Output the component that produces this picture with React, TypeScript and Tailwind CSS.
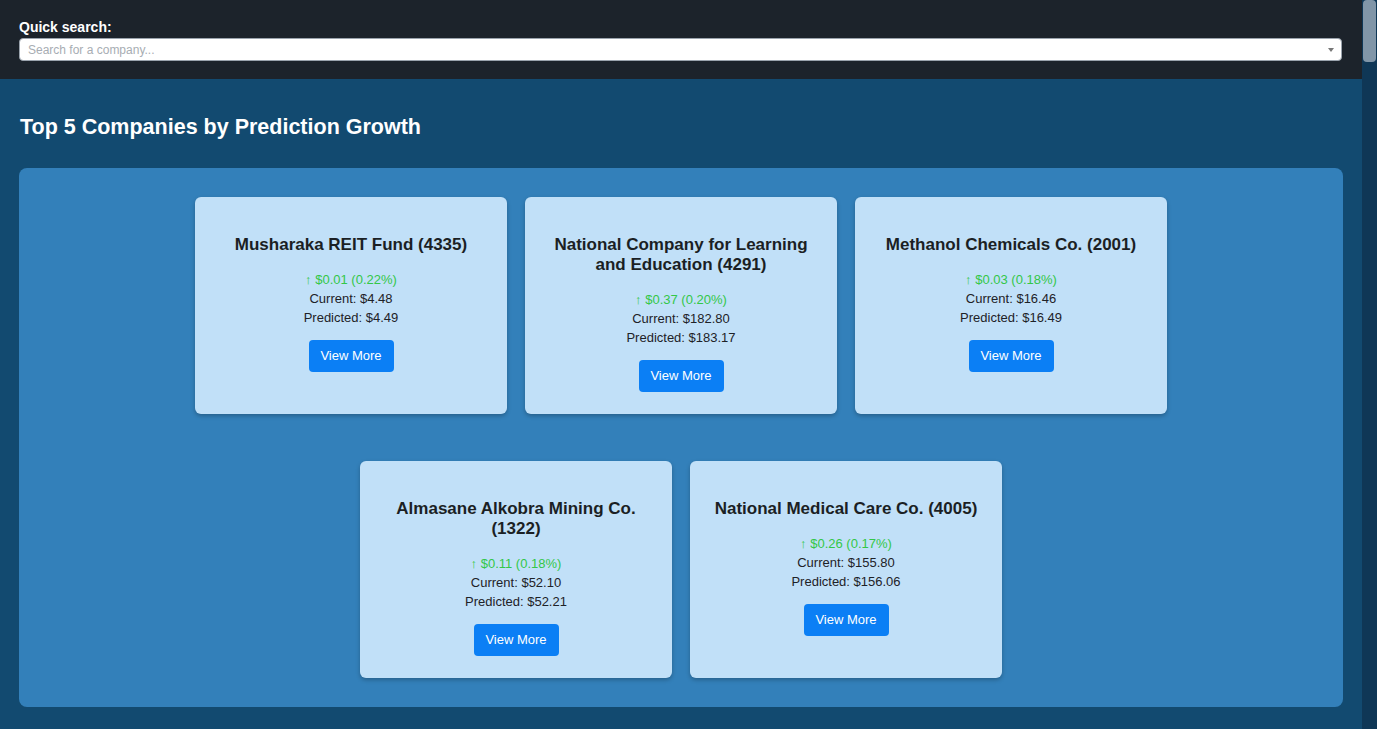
const companies = [
  { name: 'Musharaka REIT Fund (4335)', change: '0.01', pct: '0.22', current: '4.48', predicted: '4.49' },
  { name: 'National Company for Learning and Education (4291)', change: '0.37', pct: '0.20', current: '182.80', predicted: '183.17' },
  { name: 'Methanol Chemicals Co. (2001)', change: '0.03', pct: '0.18', current: '16.46', predicted: '16.49' },
  { name: 'Almasane Alkobra Mining Co. (1322)', change: '0.11', pct: '0.18', current: '52.10', predicted: '52.21' },
  { name: 'National Medical Care Co. (4005)', change: '0.26', pct: '0.17', current: '155.80', predicted: '156.06' },
];

function CompanyCard({ c }) {
  return (
    <div className="w-[312px] bg-[#c1e0f8] rounded-md shadow-[0_2px_4px_rgba(0,0,0,0.25)] px-5 pt-[38px] pb-[22px] flex flex-col items-center text-center">
      <h3 className="text-[17px] leading-[20px] font-bold text-[#1b1f24]">{c.name}</h3>
      <div className="mt-[15px] text-[13px] leading-[19px] text-[#1e2227]">
        <p className="text-[#33c748]">↑ ${c.change} ({c.pct}%)</p>
        <p>Current: ${c.current}</p>
        <p>Predicted: ${c.predicted}</p>
      </div>
      <button className="mt-[13px] w-[85px] h-[32px] rounded bg-[#0b7ff5] text-white text-[13px]">
        View More
      </button>
    </div>
  );
}

export default function App() {
  return (
    <div className="flex h-[729px] overflow-hidden font-['Liberation_Sans',Arial,sans-serif] bg-[#124a70]">
      <div className="flex-1 flex flex-col">
        {/* search header */}
        <header className="bg-[#1c232b] pl-[19px] pr-[20px] pt-[19px] pb-[18px]">
          <label className="block text-white text-[14px] leading-[16px] font-bold mb-[3px]">Quick search:</label>
          <div className="relative h-[23px] bg-white border border-[#9aa3ad] rounded-sm flex items-center px-2">
            <span className="text-[12px] text-[#a7adb3]">Search for a company...</span>
            <span className="absolute right-[7px] top-[9px] w-0 h-0 border-l-[3px] border-r-[3px] border-t-[4px] border-l-transparent border-r-transparent border-t-[#777]" />
          </div>
        </header>

        <main className="px-[19px] pt-[35px]">
          <h2 className="text-white text-[21.5px] leading-[26px] font-bold mb-[28px] pl-px">Top 5 Companies by Prediction Growth</h2>
          <div className="bg-[#3380ba] rounded-lg py-[29px] flex flex-wrap justify-center gap-x-[18px] gap-y-[47px]">
            <div className="w-full flex justify-center gap-x-[18px]">
              {companies.slice(0, 3).map((c) => <CompanyCard key={c.name} c={c} />)}
            </div>
            <div className="w-full flex justify-center gap-x-[18px]">
              {companies.slice(3).map((c) => <CompanyCard key={c.name} c={c} />)}
            </div>
          </div>
        </main>
      </div>

      {/* scrollbar */}
      <div className="w-[15px] bg-[#0f3756] flex flex-col items-center">
        <div className="w-[13px] h-[62px] bg-[#8196a8] rounded-sm" />
      </div>
    </div>
  );
}
